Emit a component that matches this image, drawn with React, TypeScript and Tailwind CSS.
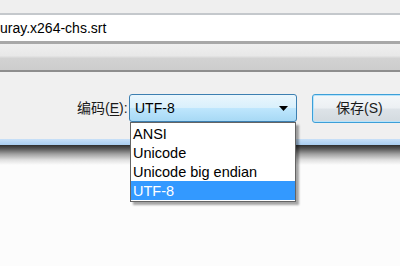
import React from 'react';

const font = { fontFamily: '"Liberation Sans", "Noto Sans CJK SC", sans-serif' };

const options = ['ANSI', 'Unicode', 'Unicode big endian', 'UTF-8'];

function EncodingSelect() {
  return (
    <div className="relative w-[168px] shrink-0">
      <div className="h-[28px] rounded-[3px] border border-[#3c7fb1] bg-[linear-gradient(#eaf6fd_0%,#d9f0fc_48%,#bee6fd_52%,#a7d9f5_100%)] flex items-center justify-between pl-[5px] pr-[8px] text-[14px] text-black">
        <span>UTF-8</span>
        {/* little combo arrow */}
        <svg width="9" height="5" viewBox="0 0 9 5">
          <path d="M0 0h9L4.5 5z" fill="#000" />
        </svg>
      </div>
      {/* open list */}
      <ul className="absolute left-[1px] top-[28px] w-[166px] border border-[#646464] bg-white py-[1px] text-[14.5px] shadow-[3px_3px_2px_rgba(0,0,0,0.35)] z-10">
        {options.map((o) => (
          <li
            key={o}
            className={
              o === 'UTF-8'
                ? 'h-[19px] leading-[20px] pl-[2px] bg-[#3399ff] text-white'
                : 'h-[19px] leading-[20px] pl-[2px] text-black'
            }
          >
            {o}
          </li>
        ))}
      </ul>
    </div>
  );
}

export default function App() {
  return (
    <div className="w-[400px] h-[266px] overflow-hidden bg-[#fcfcfc] flex flex-col" style={font}>
      {/* top strip */}
      <div className="h-[13px] shrink-0 bg-[#efefef]" />

      {/* file name field */}
      <div className="h-[31px] shrink-0 border-t-2 border-t-[#c4c8cc] border-b-[3px] border-b-[#a8a8a8] bg-white flex items-center">
        <span className="text-[14px] text-black pt-[1px]">uray.x264-chs.srt</span>
      </div>

      {/* save-as-type bar */}
      <div className="h-[28px] shrink-0 border-b-2 border-b-[#8e8e8e] bg-[linear-gradient(#efefef_0%,#e8e8e8_45%,#d2d2d2_55%,#cdcdcd_100%)]" />

      {/* dialog footer row */}
      <div className="h-[67px] shrink-0 bg-[#f0f0f0] flex items-start pt-[22px] pl-[77px] gap-[3px]">
        <span className="h-[28px] flex items-center text-[14px] text-[#1a1a1a] w-[49px] whitespace-nowrap">
          编码(<span className="underline underline-offset-2">E</span>):
        </span>
        <EncodingSelect />
        <button className="ml-[12px] w-[100px] shrink-0 h-[29px] rounded-[3px] border border-[#3c9fd8] shadow-[inset_0_0_0_1px_#b8e4fb] bg-[linear-gradient(#f4f7f9_0%,#ecf0f3_48%,#dde3e8_52%,#d3dadf_100%)] text-[14px] text-[#1a1a1a] text-left pl-[23px]">
          保存(S)
        </button>
      </div>

      {/* window frame edge + shadow */}
      <div className="h-[6px] shrink-0 bg-[linear-gradient(#c8e0f8,#a9cdf0)]" />
      <div className="h-[20px] shrink-0 bg-[linear-gradient(#2e2e2e_0%,#5a5a5a_20%,#a0a0a0_45%,#e0e0e0_75%,#fcfcfc_100%)]" />
      <div className="flex-1 bg-[#fcfcfc]" />
    </div>
  );
}
